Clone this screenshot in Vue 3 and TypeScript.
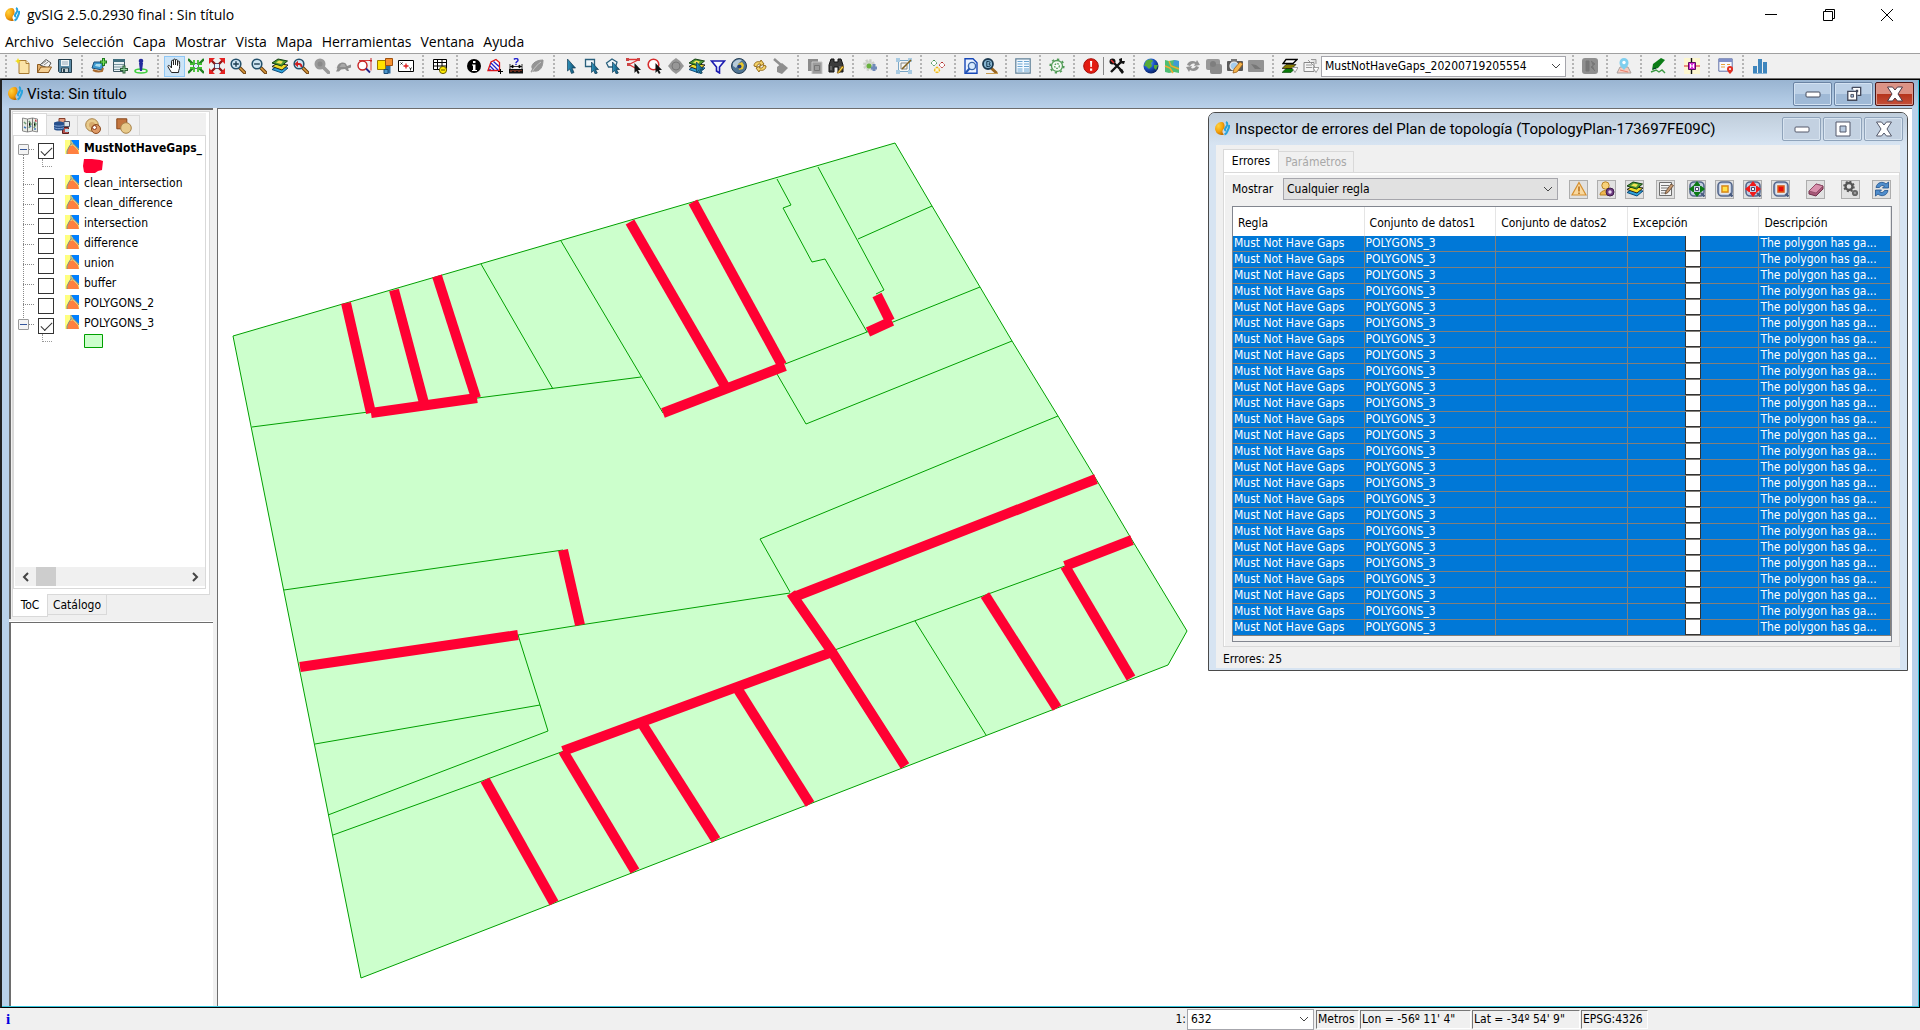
<script setup lang="ts">
import { ref } from 'vue'

interface Tool { icon: string; label: string; active?: boolean; narrow?: boolean }
interface Layer { name: string; on: boolean; current?: boolean; legend?: 'red' | 'green' }

const menus = ['Archivo', 'Selección', 'Capa', 'Mostrar', 'Vista', 'Mapa', 'Herramientas', 'Ventana', 'Ayuda']

const t = (icon: string, label: string, extra: Partial<Tool> = {}): Tool => ({ icon, label, ...extra })

const groups: Tool[][] = [
  [t('new', 'Nuevo'), t('open', 'Abrir'), t('save', 'Guardar')],
  [t('addlayer', 'Añadir capa'), t('addtable', 'Añadir tabla'), t('pin', 'Localizar')],
  [
    t('hand', 'Desplazar', { active: true }), t('zoomall', 'Zoom completo'), t('zoomsel', 'Zoom selección'),
    t('zoomin', 'Acercar'), t('zoomout', 'Alejar'), t('layers', 'Zoom a capa'), t('zoomprev', 'Zoom previo'),
    t('zoomgray', 'Zoom siguiente'), t('turtle', 'Encuadres'), t('zoomrect', 'Gestión de encuadres'),
    t('locator', 'Localizador'), t('coords', 'Centrar en punto'),
  ],
  [t('grid', 'Tabla de atributos')],
  [t('info', 'Información'), t('area', 'Medir área'), t('dist', 'Medir distancia'), t('link', 'Hiperenlace')],
  [
    t('cursor', 'Seleccionar'), t('selrect', 'Por rectángulo'), t('selpoly', 'Por polígono'), t('selline', 'Por polilínea'),
    t('selcirc', 'Por círculo'), t('selbuf', 'Por área de influencia'), t('sellay', 'Por capa'), t('filter', 'Filtro'),
    t('globe', 'Seleccionar todo'), t('invert', 'Invertir selección'), t('broom', 'Limpiar selección'),
  ],
  [t('copy', 'Copiar'), t('binoc', 'Buscar')],
  [t('geargreen', 'Geoproceso')],
  [t('editbox', 'Editar')],
  [t('diamonds', 'Topología')],
  [t('doczoom', 'Vista previa', { narrow: true }), t('bzoom', 'Búsqueda', { narrow: true })],
  [t('doclist', 'Listado')],
  [t('cog', 'Configuración')],
  [t('alert', 'Errores')],
]
const groupsAfter: Tool[] = [
  t('earth', 'Mundo'), t('map', 'Mapa'), t('sync', 'Sincronizar'), t('shots', 'Capturas'), t('camera', 'Cámara'), t('screen', 'Pantalla'),
]
const tail: Tool[] = [
  t('bw', 'Ráster'), t('marker', 'Marcador'), t('pen', 'Dibujar'), t('snap', 'Ajuste'), t('calendar', 'Calendario'), t('bars', 'Gráfico'),
]

const layers = ref<Layer[]>([
  { name: 'MustNotHaveGaps_', on: true, current: true, legend: 'red' },
  { name: 'clean_intersection', on: false },
  { name: 'clean_difference', on: false },
  { name: 'intersection', on: false },
  { name: 'difference', on: false },
  { name: 'union', on: false },
  { name: 'buffer', on: false },
  { name: 'POLYGONS_2', on: false },
  { name: 'POLYGONS_3', on: true, legend: 'green' },
])

const inspectorTools: Tool[][] = [
  [t('warn', 'Errores'), t('user', 'Excepciones'), t('layers', 'Capas')],
  [t('note', 'Descripción')],
  [t('zgreen', 'Zoom al error'), t('zyellow', 'Centrar error'), t('zred', 'Zoom a la selección'), t('zredsq', 'Centrar selección')],
  [t('eraser', 'Borrar')],
  [t('gears', 'Acciones')],
  [t('refresh', 'Actualizar')],
]
const columns = ['Regla', 'Conjunto de datos1', 'Conjunto de datos2', 'Excepción', 'Descripción']
const errors = ref(Array.from({ length: 25 }, () => ({
  rule: 'Must Not Have Gaps', set1: 'POLYGONS_3', set2: '', exception: false, text: 'The polygon has ga...',
})))

const outline = '895,143 932,206 980,287 1012,341 1058,416 1096,479 1132,540 1187,631 1168,665 361,978 233,336'
const parcels = [
  '932,206 858,239', '818,167 884,290 876,294', '777,179 791,205 783,208 812,262 825,259 867,332',
  '980,287 893,322 867,332 785,364', '1012,341 806,424 777,374', '1058,416 760,539 790,592',
  '481,264 553,389', '561,241 663,413', '641,377 252,427', '284,590 563,550', '790,593 580,625 518,635',
  '518,635 540,705 548,731 328,815', '540,705 315,744', '333,835 482,781 564,751', '832,651 1065,566', '915,621 986,735',
]
const gaps = [
  '346,303 371,413', '394,290 424,403', '437,276 476,398', '371,413 477,398', '630,222 726,388', '693,202 782,365',
  '663,413 785,366', '877,295 890,321', '892,321 868,332', '563,550 580,625', '300,667 518,635', '1096,479 794,597',
  '791,593 832,652 905,766', '832,652 563,751', '563,751 635,871', '641,722 716,840', '737,688 810,804',
  '1132,540 1065,566', '1065,566 1131,678', '985,595 1057,708', '485,780 554,903',
]
</script>

<template>
  <div class="app">
    <svg class="sprite" aria-hidden="true">
      <defs>
        <radialGradient id="gOrange" cx="35%" cy="30%" r="75%"><stop offset="0" stop-color="#ffd23c" /><stop offset=".6" stop-color="#f5a20c" /><stop offset="1" stop-color="#c46f00" /></radialGradient>
        <radialGradient id="gEarth" cx="35%" cy="30%" r="75%"><stop offset="0" stop-color="#6db7f5" /><stop offset=".5" stop-color="#1b52c4" /><stop offset="1" stop-color="#071d5c" /></radialGradient>
        <linearGradient id="gCursor" x1="0" x2="1"><stop offset="0" stop-color="#2f93bd" /><stop offset="1" stop-color="#0d4a6b" /></linearGradient>
      </defs>
      <symbol id="i-logo" viewBox="0 0 16 16"><path d="M7 1a6.500 6.500 0 1 0 3 12.500C8 12 8 9.500 9.500 8 11 6.500 11 3 9 1.300A6 6 0 0 0 7 1z" fill="url(#gOrange)" /><path d="M12 1c2 1 1.500 3.500 .2 5-1.300 1.600-2 3-.2 4M15 4c.6 3-1 4-1.500 6-.5 1.800-1.500 3-3 3.500" fill="none" stroke="#27a3dd" stroke-width="2" /></symbol>
      <symbol id="i-new" viewBox="0 0 16 16"><path d="M4 2.500h7l3 3v10H4z" fill="#fbe3a6" stroke="#a87b33" /><path d="M11 2.500v3h3" fill="#fff4d2" stroke="#a87b33" /><path d="M3 0l1 2.200L6 3 4 4 3 6 2 4 0 3l2-.8z" fill="#f2dc16" /></symbol>
      <symbol id="i-open" viewBox="0 0 16 16"><path d="M1.500 14.500v-8h4l1 1h6v7z" fill="#e1ad68" stroke="#8c5a1f" /><path d="M4 7l6-5.500L15 5l-3 5z" fill="#f4f4f4" stroke="#555" /><path d="M6 6l4-3M8 7l4-3" stroke="#888" /><path d="M1.500 14.500L5 9h10.500l-3 5.500z" fill="#f5cf92" stroke="#8c5a1f" /></symbol>
      <symbol id="i-save" viewBox="0 0 16 16"><path d="M1.500 1.500h13v13h-12l-1-1z" fill="#5d8ca8" stroke="#26404e" /><path d="M4 2h8v6H4z" fill="#eef3f5" /><path d="M5 4h6M5 6h6" stroke="#9ab" /><path d="M4.500 10h7v4.500h-7z" fill="#c5d0d5" stroke="#26404e" /><path d="M6 11h2v3H6z" fill="#26404e" /></symbol>
      <symbol id="i-addlayer" viewBox="0 0 16 16"><path d="M3 4l10 0-2 8-10-2z" fill="#3d9ad0" stroke="#1d4d78" /><path d="M5 6l5 0-1 3-5-1z" fill="#a8dcf2" /><path d="M2 12c2 1 5 2 9 1l1-3" stroke="#a8692c" stroke-width="2" fill="none" /><path d="M12.500 0v8M9 4h7" stroke="#1f7a1f" stroke-width="3" /><path d="M12.500 1v6M10 4h5" stroke="#7be35c" /></symbol>
      <symbol id="i-addtable" viewBox="0 0 16 16"><path d="M1.500 1.500h11v12h-11z" fill="#e8f0f2" stroke="#3d5560" /><path d="M1 1h12v3H1z" fill="#3f6e7e" /><path d="M2 6.500h10M2 9h10M2 11.500h10" stroke="#78959e" /><path d="M12 7.500v8M8 11.500h8" stroke="#2b5f37" stroke-width="3" /><path d="M12 8.500v6M9 11.500h6" stroke="#8fd19a" /></symbol>
      <symbol id="i-pin" viewBox="0 0 16 16"><ellipse cx="8" cy="13" rx="6" ry="2" fill="none" stroke="#3ecf3e" stroke-width="1.600" /><circle cx="8" cy="3" r="2.300" fill="#222a9c" /><path d="M6 5h4l-1 8H7z" fill="#222a9c" /></symbol>
      <symbol id="i-hand" viewBox="0 0 16 16"><path d="M4.500 14.500L1 8.800c-.6-1.300 1-2 1.800-.8L4.500 10V3.200c0-1.200 1.800-1.200 1.900 0L6.500 7V2c0-1.300 2-1.300 2 0v5-4.500c0-1.200 2-1.200 2 0V7.500l.3-3.700c.2-1.100 1.800-1 1.800 .2 0 4 .4 6-.9 8.500l-.2 2z" fill="#fff" stroke="#222" /></symbol>
      <symbol id="i-zoomall" viewBox="0 0 16 16"><path d="M5.500 5.500h5v5h-5z" fill="#dff3ff" stroke="#667" /><path d="M0 1l5 5M16 1l-5 5M0 15l5-5M16 15l-5-5" stroke="#1e7f1e" stroke-width="2.400" /><path d="M6 2v4H2M10 2v4h4M6 14v-4H2M10 14v-4h4" fill="none" stroke="#3fbe2f" stroke-width="1.800" /></symbol>
      <symbol id="i-zoomsel" viewBox="0 0 16 16"><path d="M5.500 5.500h5v5h-5z" fill="#dff3ff" stroke="#557" /><path d="M2 2l4 4M14 2l-4 4M2 14l4-4M14 14l-4-4" stroke="#8e1717" stroke-width="2.400" /><path d="M0 0h6L0 6zM16 0h-6l6 6zM0 16h6l-6-6zM16 16h-6l6-6z" fill="#e52222" /></symbol>
      <symbol id="i-mag" viewBox="0 0 16 16"><path d="M9.500 9.500l5 5" stroke="#6b3d0a" stroke-width="3.600" stroke-linecap="round" /><path d="M10 10l4.500 4.500" stroke="#d99b40" stroke-width="1.600" stroke-linecap="round" /><circle cx="6" cy="6" r="4.800" fill="#cfe6f3" stroke="#23506b" stroke-width="1.600" /></symbol>
      <symbol id="i-zoomin" viewBox="0 0 16 16"><use href="#i-mag" /><path d="M6 3.200v5.600M3.200 6h5.600" stroke="#1d3c50" stroke-width="1.400" /></symbol>
      <symbol id="i-zoomout" viewBox="0 0 16 16"><use href="#i-mag" /><path d="M3.200 6h5.600" stroke="#1d3c50" stroke-width="1.400" /></symbol>
      <symbol id="i-layers" viewBox="0 0 16 16"><path d="M0 11.500l5-3 11 1.500-6 5z" fill="#2da3dc" stroke="#0c4a78" /><path d="M0 8.500l5-3L16 7l-6 5z" fill="#f0dc28" stroke="#222" /><path d="M0 5l6-4 9.500 2L9.500 8z" fill="#4f9834" stroke="#123f12" /><path d="M4 4.500l3-2 4 1-2 2.500z" fill="#f3e555" /></symbol>
      <symbol id="i-zoomprev" viewBox="0 0 16 16"><use href="#i-mag" /><path d="M3 6h3c2 0 2.500 1 2.500 3" fill="none" stroke="#cf1d1d" stroke-width="1.800" /><path d="M1.500 6L5 2.800v6.400z" fill="#cf1d1d" /></symbol>
      <symbol id="i-zoomgray" viewBox="0 0 16 16"><path d="M9.500 9.500l5 5" stroke="#9a9a9a" stroke-width="3.600" stroke-linecap="round" /><circle cx="6" cy="6" r="5.500" fill="#9a9a9a" /><circle cx="6" cy="6" r="2.500" fill="#8a8a8a" /></symbol>
      <symbol id="i-turtle" viewBox="0 0 16 16"><path d="M2 10c0-6 9-8 10-2l4-1.500V9.500L13 10.500l1 2.500h-2l-2-2-4 .5-2 2H1l1.500-3-2.500-1z" fill="#8d8d8d" /><path d="M4.500 9l2-3 3 0 1.500 3z" fill="#a9a9a9" /></symbol>
      <symbol id="i-zoomrect" viewBox="0 0 16 16"><path d="M3 2.500h12v10" fill="none" stroke="#d43c3c" /><circle cx="6.500" cy="7.500" r="4.500" fill="#fff" stroke="#c62020" stroke-width="1.400" /><path d="M10 10.500l4 4" stroke="#23238a" stroke-width="1.800" /><path d="M15 0v4M13 2.500h3" stroke="#c62020" /></symbol>
      <symbol id="i-locator" viewBox="0 0 16 16"><path d="M7 7h6.500v8.500H7z" fill="#2d6da3" /><path d="M.5 2.500h8v9h-8z" fill="#ffe100" stroke="#977800" /><path d="M8.500 .5h7v7h-7z" fill="#f79130" stroke="#a0500c" /><path d="M7 11.500h4v4H7z" fill="#4b96cc" stroke="#1b4c78" /></symbol>
      <symbol id="i-coords" viewBox="0 0 16 16"><path d="M.5 2.500h15v11H.5z" fill="#fff" stroke="#000" /><path d="M8 5.500v5M5.500 8h5" stroke="#e01b1b" stroke-width="1.300" /><path d="M2.500 4.500l2 2m0-2l-2 2M11.500 9.500l1 1.500 1-1.500M12.500 11v1.500" stroke="#000" stroke-width=".8" fill="none" /></symbol>
      <symbol id="i-grid" viewBox="0 0 16 16"><path d="M1.500 1.500h13v10h-13zM1.500 4.500h13M1.500 8h13M5.500 1.500v10M10 1.500v10" fill="#fff" stroke="#000" /><circle cx="11" cy="12" r="3.600" fill="#ffeb00" stroke="#665b00" /><path d="M9 12h4" stroke="#665b00" /></symbol>
      <symbol id="i-info" viewBox="0 0 16 16"><circle cx="8" cy="8" r="7" fill="#000" /><path d="M7 3h2.500v2H7zM6 6.500h3.500V12H11v1H6v-1h1V7.500H6z" fill="#fff" /></symbol>
      <symbol id="i-area" viewBox="0 0 16 16"><path d="M1 12.500L4 4l5-2.500 3.500 3v8z" fill="#fff" stroke="#e01515" stroke-width="1.300" /><path d="M3 8l4 4M4 5l7 7M6.500 3.500l5.500 5M2.500 11l1 1" stroke="#2020cc" stroke-width="1.300" /><path d="M13.500 11v5M11 13.500h5" stroke="#000" /></symbol>
      <symbol id="i-dist" viewBox="0 0 16 16"><path d="M6 1.500c1-1.500 4-1.300 4 .7 0 1.500-2 1.500-2 3M8 6v1" fill="none" stroke="#2525d0" stroke-width="1.500" /><path d="M2 8.500h12M2 6v5M14 6v5M3 8.500l2-1.500v3zM13 8.500l-2-1.500v3z" stroke="#000" stroke-width=".8" /><path d="M1 11h14v4.500H1z" fill="#111" /><path d="M3 12v2M5 12v1M7 12v2M9 12v1M11 12v2M13 12v1" stroke="#e53" stroke-width=".8" /></symbol>
      <symbol id="i-link" viewBox="0 0 16 16"><path d="M2 14l1.500-3C1 7 6 2 14 2c0 7-3 12-9 11z" fill="#949494" stroke="#949494" /><path d="M3 14c3-5 5-7 9-10" stroke="#c5c5c5" fill="none" /></symbol>
      <symbol id="i-cursor" viewBox="0 0 16 16"><path d="M4.500 1l8 9H9l2 4.500-2.500 1L6.700 11l-2.200 2z" fill="url(#gCursor)" stroke="#123c55" stroke-width=".7" /></symbol>
      <symbol id="i-cur2" viewBox="0 0 16 16"><path d="M7.500 4l7 7.500h-3l1.800 3.500-2 1L9.500 12.500l-2 2z" fill="url(#gCursor)" stroke="#123c55" stroke-width=".7" /></symbol>
      <symbol id="i-cur3" viewBox="0 0 16 16"><path d="M8.500 5l6.500 7h-3l1.600 3-1.600 1L10.300 13l-1.800 2z" fill="#111" /></symbol>
      <symbol id="i-selrect" viewBox="0 0 16 16"><path d="M1.500 1.500h9v7h-9z" fill="#eff6fa" stroke="#2a607c" stroke-width="1.300" /><use href="#i-cur2" /></symbol>
      <symbol id="i-selpoly" viewBox="0 0 16 16"><path d="M1.500 5L7 1l5 3-1.500 5h-7z" fill="#eff6fa" stroke="#2a607c" stroke-width="1.300" /><use href="#i-cur2" /></symbol>
      <symbol id="i-selline" viewBox="0 0 16 16"><path d="M2 1.500h11L3 6.500 11 11" fill="none" stroke="#d33" stroke-width="1.300" /><path d="M0 0h3v3H0zM11 0h3v3h-3zM1 5h3v3H1z" fill="#c44" /><use href="#i-cur3" /></symbol>
      <symbol id="i-selcirc" viewBox="0 0 16 16"><circle cx="6.500" cy="6.500" r="5.300" fill="#fff" stroke="#d62d2d" stroke-width="1.600" /><use href="#i-cur3" /></symbol>
      <symbol id="i-selbuf" viewBox="0 0 16 16"><path d="M8 0l4 3 4 5-4 5-4 3-4-3-4-5 4-5z" fill="#979797" /><circle cx="8" cy="8" r="4" fill="none" stroke="#777" /></symbol>
      <symbol id="i-sellay" viewBox="0 0 16 16"><use href="#i-layers" /><use href="#i-cur2" /></symbol>
      <symbol id="i-filter" viewBox="0 0 16 16"><path d="M1.500 3h13L9.500 9v6l-3-2V9z" fill="#f3f5ff" stroke="#1a1ab0" stroke-width="1.600" /></symbol>
      <symbol id="i-globe" viewBox="0 0 16 16"><circle cx="8" cy="8" r="7.500" fill="#4f7392" stroke="#243c52" /><path d="M2 5c3-4 7-4 9-3l-3 3-3 5-3-2z" fill="#b8cbd8" /><path d="M7 6l4-2 2 3-1 4-4 1z" fill="#e8c62c" /><circle cx="8.500" cy="8.500" r="2" fill="#223c7a" /></symbol>
      <symbol id="i-invert" viewBox="0 0 16 16"><path d="M2 8c0-4 4-5 6-4l1-2 3 4-4 2 .5-2C6 5.500 5 7 5 9zM14 8c0 4-4 5-6 4l-1 2-3-4 4-2-.5 2c3 .5 4-1 4-3z" fill="#f5d36a" stroke="#8d6210" stroke-width=".9" /></symbol>
      <symbol id="i-broom" viewBox="0 0 16 16"><path d="M1 1l7 6" stroke="#8e8e8e" stroke-width="2.500" /><path d="M4 9l5-4 6 5-6 6-5-2z" fill="#8e8e8e" /></symbol>
      <symbol id="i-copy" viewBox="0 0 16 16"><path d="M1 1h10v12H1z" fill="#8b8b8b" /><path d="M5 4h10v12H5z" fill="#9c9c9c" stroke="#c7c7c7" /><path d="M7.500 7.500h5v5h-5z" fill="none" stroke="#777" /></symbol>
      <symbol id="i-binoc" viewBox="0 0 16 16"><path d="M3 1h3v3h4V1h3l2 6v7h-5V9H6v5H1V7z" fill="#3c3c3c" stroke="#111" /><path d="M3 8v4M12 8v4" stroke="#8a8a8a" /><path d="M9 15l5-7 2 1-5 6z" fill="#f5d04d" stroke="#7c5200" stroke-width=".7" /></symbol>
      <symbol id="i-geargreen" viewBox="0 0 16 16"><circle cx="7" cy="7" r="4.500" fill="#d5d8d2" stroke="#cccfc9" stroke-width="3" stroke-dasharray="2 1.500" /><circle cx="7" cy="8" r="2.500" fill="#68b13e" /><path d="M12 6v7M9 10h6" stroke="#6f8ab8" stroke-width="3" /></symbol>
      <symbol id="i-editbox" viewBox="0 0 16 16"><path d="M2.500 2.500h11v11h-11z" fill="#f6f6f2" stroke="#7aa6c6" /><path d="M5 11V5h6M5 11h6V7" fill="none" stroke="#888" /><path d="M0 0h4v4H0zM12 0h4v4h-4zM12 12h4v4h-4zM0 12h4v4H0z" fill="#a9cbe2" /><path d="M6 11l9-9" stroke="#80601c" stroke-width="1.600" /></symbol>
      <symbol id="i-diamonds" viewBox="0 0 16 16"><path d="M4 2l3 3-3 3-3-3z" fill="#fff" stroke="#3b8f4c" stroke-dasharray="1.500 .7" /><path d="M12 4l3 3-3 3-3-3z" fill="#fff" stroke="#b22c2c" stroke-dasharray="1.500 .7" /><path d="M7 9l3 3-3 3-3-3z" fill="#fff7cc" stroke="#efb710" stroke-width="1.300" stroke-dasharray="1.500 .7" /></symbol>
      <symbol id="i-doczoom" viewBox="0 0 16 16"><path d="M2 .8h8l4 4v10.500H2z" fill="#eaf2ff" stroke="#1647b8" stroke-width="1.400" /><circle cx="9" cy="8" r="3.600" fill="#d8eaff" stroke="#3a66aa" stroke-width="1.400" /><path d="M6.500 10.500l-4 4.500" stroke="#2657b5" stroke-width="2" /></symbol>
      <symbol id="i-bzoom" viewBox="0 0 16 16"><path d="M8 9l6 5.500" stroke="#9a661f" stroke-width="3" stroke-linecap="round" /><circle cx="6" cy="6" r="5" fill="#86b5d1" stroke="#1b3a50" stroke-width="1.800" /><path d="M4.800 3.500v5h2c2 0 2-2.300 0-2.500 1.600-.3 1.600-2.500-.2-2.500z" fill="none" stroke="#14364d" /><path d="M4 15.500h12" stroke="#c89b4e" /></symbol>
      <symbol id="i-doclist" viewBox="0 0 16 16"><path d="M.8 .8h14.400v14.400H.8z" fill="#f2f9ff" stroke="#5f8098" stroke-width="1.200" /><path d="M2.500 3.500h5M2.500 6h5M2.500 8.500h5M2.500 11h5M9 3.500h5M9 6h5M9 8.500h5M9 11h5M2.500 13h5M9 13h5" stroke="#6ba5d1" /></symbol>
      <symbol id="i-cog" viewBox="0 0 16 16"><circle cx="8" cy="8" r="5.500" fill="#f1f8ef" stroke="#4f9a55" stroke-width="1.300" /><circle cx="8" cy="8" r="6.800" fill="none" stroke="#4f9a55" stroke-width="1.600" stroke-dasharray="2.300 3" /><circle cx="8" cy="8" r="2.300" fill="#fff" stroke="#4f9a55" stroke-width="1.200" stroke-dasharray="1.500 1" /></symbol>
      <symbol id="i-alert" viewBox="0 0 16 16"><circle cx="8" cy="8" r="7.300" fill="#e31c12" stroke="#a50d08" /><path d="M7 3h2.200l-.4 6H7.400zM7 10.500h2.200v2.200H7z" fill="#fff" /></symbol>
      <symbol id="i-tools" viewBox="0 0 16 16"><path d="M4 4l9 9M12 4L2 14" stroke="#111" stroke-width="2.400" /><path d="M10 1l1 4 4 1 1-3-3 0 0-3zM10 12l3-1 2 3-2 2z" fill="#111" /><circle cx="3.500" cy="3.500" r="3" fill="#111" /><path d="M2 2l3 3" stroke="#d33" stroke-width="1.600" /></symbol>
      <symbol id="i-earth" viewBox="0 0 16 16"><circle cx="8" cy="8" r="7.500" fill="url(#gEarth)" /><path d="M3 3c3-2 6-2 7 0L8 5l1 3-3 3-3-3-2 0zM11 7l4 0-2 5-2-2z" fill="#58ab38" /></symbol>
      <symbol id="i-map" viewBox="0 0 16 16"><path d="M1 2l4 1 5-1 5 1v12l-5-1-5 1-4-1z" fill="#4dbd74" /><path d="M10 2l5 1v6l-6-2z" fill="#3f99d6" /><path d="M1 8l5 2 3 5M5 3l2 5 8 3" fill="none" stroke="#f0a92e" stroke-width="1.500" /></symbol>
      <symbol id="i-sync" viewBox="0 0 16 16"><path d="M2 7c1-4 6-5 9-3l1-2 3 5-6 1 1-2c-2-1-4 0-5 2zM14 9c-1 4-6 5-9 3l-1 2-3-5 6-1-1 2c2 1 4 0 5-2z" fill="#939393" /></symbol>
      <symbol id="i-shots" viewBox="0 0 16 16"><rect x="0" y="1" width="14" height="11" rx="2" fill="#999" /><rect x="4" y="6" width="12" height="10" rx="2" fill="#8b8b8b" /><circle cx="7" cy="6" r="3" fill="#7e7e7e" /></symbol>
      <symbol id="i-camera" viewBox="0 0 16 16"><rect x="0" y="3" width="16" height="10" rx="1" fill="#595959" /><path d="M4 1h6v3H4z" fill="#777" /><circle cx="7" cy="8" r="4" fill="#a5cdec" stroke="#eee" stroke-width="1.200" /><path d="M6 15l1-4 6-7 3 2-6 8z" fill="#f4b44b" stroke="#9a5b14" stroke-width=".8" /></symbol>
      <symbol id="i-screen" viewBox="0 0 16 16"><rect x="0" y="2" width="16" height="12" rx="1" fill="#929292" /><path d="M3 6l5 1 5 4-6 0z" fill="#777" /></symbol>
      <symbol id="i-stack" viewBox="0 0 16 16"><path d="M4 10.500h9l-4 4H0z" fill="#087a08" stroke="#043f04" stroke-width=".6" /><path d="M4 6.500h10l-4 4H0z" fill="#847b00" stroke="#000" stroke-width=".6" /><path d="M4 1.500h11l-4 4H1z" fill="#fff" stroke="#000" stroke-width="1.300" /><path d="M10 9.500h6l-3 5z" fill="#fff" stroke="#888" stroke-width=".8" /></symbol>
      <symbol id="i-editstack" viewBox="0 0 16 16"><path d="M1 4.500h10v9H1z" fill="#f5f5f5" stroke="#888" /><path d="M3 7h6M3 9.500h6M5 2l7 7" stroke="#999" /><path d="M8 1.500h5V6" fill="#ddd" stroke="#999" /><path d="M10 9.500h6l-3 5z" fill="#fff" stroke="#888" stroke-width=".8" /></symbol>
      <symbol id="i-bw" viewBox="0 0 16 16"><rect x="0" y="0" width="16" height="16" rx="3" fill="#8f8f8f" /><path d="M4 3h3v10H4zM9 3l4 3-4 3 4 4" fill="#777" stroke="#777" /></symbol>
      <symbol id="i-marker" viewBox="0 0 16 16"><path d="M1 15l3-6h8l3 6z" fill="#f7c9bd" stroke="#a9a29f" /><path d="M4 12l8 2" stroke="#e9806b" /><path d="M8 12C4 8 3.500 6.500 3.500 4.500a4.500 4.500 0 0 1 9 0C12.500 6.500 12 8 8 12z" fill="#80cfef" /><circle cx="8" cy="4.500" r="1.700" fill="#fff" /></symbol>
      <symbol id="i-pen" viewBox="0 0 16 16"><path d="M2 12l1-6 8-6 4 2-7 8z" fill="#0b7c16" /><path d="M3 11l3-1" stroke="#033" /><path d="M1 14l5-2 3 2 3-2 3 3" fill="none" stroke="#3b9a43" stroke-width="1.400" /></symbol>
      <symbol id="i-snap" viewBox="0 0 16 16"><path d="M0 0h16v16H0z" fill="#fdf7cf" /><path d="M7.500 0v16" stroke="#111" stroke-width="1.400" /><path d="M0 8h16" stroke="#e25353" stroke-width="1.300" /><path d="M4.500 4.500h7v7h-7z" fill="#d633d6" stroke="#5d0a5d" /><path d="M6.500 6v4M9.500 6v4M6.500 8h3" stroke="#fff" /></symbol>
      <symbol id="i-calendar" viewBox="0 0 16 16"><path d="M.8 .8h13.400v12.400H.8z" fill="#f8f9ff" stroke="#6272a8" /><path d="M1 1h13v3H1z" fill="#7f8fc8" /><path d="M3 6.500h4M3 9h4M9 6.500h3" stroke="#e8a13a" /><path d="M12 16c-3-3-3-4-3-5a3 3 0 0 1 6 0c0 1 0 2-3 5z" fill="#e33022" /><circle cx="12" cy="11" r="1" fill="#fff" /></symbol>
      <symbol id="i-bars" viewBox="0 0 16 16"><path d="M1 8h4v7H1zM6 1h4v14H6zM11 4h4v11h-4z" fill="#3f86bd" /><path d="M1 15.500h14" stroke="#8bb6d8" /></symbol>
      <symbol id="i-layer" viewBox="0 0 14 14"><path d="M0 0h14v14H0z" fill="#ffff80" /><path d="M6 0h8v9L9 5z" fill="#0080ff" /><path d="M2 14c0-4 2-6 3-8l3-1 5 5 1 4z" fill="#ff8040" /><path d="M6 0v4l-2 3-2 4v3M6 4h3l5 6" fill="none" stroke="#808080" /></symbol>
      <symbol id="i-tabmap" viewBox="0 0 16 16"><path d="M.5 1l5 1 5-1 5 1v13l-5-1-5 1-5-1z" fill="#e9ece4" stroke="#8a8a8a" /><path d="M5.500 2v13M10.500 1v13" stroke="#777" /><path d="M2 5l2 2M7 4l2 3-2 4M12 5l2 2-2 4" stroke="#6d9a75" stroke-width="1.500" /><path d="M2 10l2 1M8 9l1 1M12 12l2 0" stroke="#4178c0" stroke-width="1.500" /><path d="M13 3h1v2" stroke="#d45" /></symbol>
      <symbol id="i-tabdb" viewBox="0 0 16 16"><path d="M5 .5h6v5H5z" fill="#e79a7c" stroke="#84412c" /><path d="M10 3.500h5.500v5H10z" fill="#dbe4ea" stroke="#556" /><path d="M8.500 9.500h6v6h-6z" fill="#b5504c" stroke="#5c1f1f" /><path d="M11 11h4v3h-4z" fill="#b8d9e8" /><path d="M0 5c0-2 10-2 10 0v6c0 2-10 2-10 0z" fill="#27508c" /><path d="M0 7c1 1.500 9 1.500 10 0M0 9.500c1 1.500 9 1.500 10 0" fill="none" stroke="#80a3d3" /></symbol>
      <symbol id="i-tabcirc" viewBox="0 0 16 16"><circle cx="7" cy="7" r="6.300" fill="#e8ca8b" stroke="#a9834a" /><circle cx="7" cy="7" r="3" fill="#d7a96b" /><circle cx="11" cy="11" r="4.500" fill="#dd9a66" stroke="#8d4c1f" /><circle cx="9.500" cy="9.500" r="2" fill="#fff" stroke="#8d3c1f" /></symbol>
      <symbol id="i-tabsq" viewBox="0 0 16 16"><path d="M.8 .8h10v10H.8z" fill="#c4763f" stroke="#884719" /><circle cx="10" cy="10" r="5.300" fill="#e8ca8b" stroke="#a9834a" /></symbol>
      <symbol id="i-warn" viewBox="0 0 16 16"><path d="M8 1.500l7 12.500H1z" fill="#f9d9a0" stroke="#d58f2f" stroke-width="1.200" /><path d="M8 5.500v5M8 11.500v1.500" stroke="#b86c14" stroke-width="1.500" /></symbol>
      <symbol id="i-user" viewBox="0 0 16 16"><circle cx="6.500" cy="4.500" r="3.700" fill="#f7d179" stroke="#b78326" /><path d="M1 14c0-6 11-6 11 0z" fill="#f0b84e" stroke="#b78326" /><circle cx="11" cy="11" r="4" fill="#6d3b80" stroke="#3c1c49" /><circle cx="11" cy="11" r="1.700" fill="#e8d7ef" /></symbol>
      <symbol id="i-note" viewBox="0 0 16 16"><path d="M1.500 1.500h12v13h-12z" fill="#f4f4f4" stroke="#6d6d6d" /><path d="M3 4.500h8M3 7h7M3 9.500h5M3 12h4" stroke="#777" /><path d="M7 13l1-3 5-7 2.500 1.500-5.500 7z" fill="#c59a72" stroke="#59402c" stroke-width=".8" /></symbol>
      <symbol id="i-lens" viewBox="0 0 16 16"><rect x="1" y="1" width="14" height="14" rx="4" fill="#c3cee2" stroke="#55688c" stroke-width="1.600" /><path d="M12 12l3.500 3.500" stroke="#4a5c80" stroke-width="2.400" /></symbol>
      <symbol id="i-arrows4" viewBox="0 0 16 16"><path d="M8 0l4 5H4zM8 16l4-5H4zM0 8l5-4v8zM16 8l-5-4v8z" /><path d="M6.500 6.500h3v3h-3z" fill="#fff" stroke="#446" /></symbol>
      <symbol id="i-zgreen" viewBox="0 0 16 16"><use href="#i-lens" /><use href="#i-arrows4" fill="#0b7a14" /></symbol>
      <symbol id="i-zred" viewBox="0 0 16 16"><use href="#i-lens" /><use href="#i-arrows4" fill="#f01a1a" /></symbol>
      <symbol id="i-zyellow" viewBox="0 0 16 16"><use href="#i-lens" /><path d="M3.500 3.500h9v9h-9z" fill="none" stroke="#e9e9e9" /><path d="M5 5h6v6H5z" fill="#ffe14a" stroke="#e08a10" stroke-width="1.400" /></symbol>
      <symbol id="i-zredsq" viewBox="0 0 16 16"><use href="#i-lens" /><path d="M3.500 3.500h9v9h-9z" fill="none" stroke="#e9e9e9" /><path d="M5 5h6v6H5z" fill="#e80c0c" stroke="#e05a10" stroke-width="1.400" /></symbol>
      <symbol id="i-eraser" viewBox="0 0 16 16"><path d="M1 10l7-7 7 2v3l-7 7-7-2z" fill="#a85878" stroke="#6e3049" /><path d="M1 10l7-7 7 2-7 7z" fill="#d990ac" stroke="#8c4763" stroke-width=".8" /></symbol>
      <symbol id="i-gears" viewBox="0 0 16 16"><circle cx="6" cy="5.500" r="3.500" fill="none" stroke="#555" stroke-width="2.400" /><circle cx="6" cy="5.500" r="5" fill="none" stroke="#555" stroke-width="1.500" stroke-dasharray="2 1.900" /><circle cx="12" cy="12" r="2.200" fill="#999" stroke="#666" stroke-width="1.800" /></symbol>
      <symbol id="i-refresh" viewBox="0 0 16 16"><path d="M2 6.500C3 1 9 0 12 3l2.500-2v6H8.500l2-2C8.500 4 6.500 4.500 5.500 6.500zM14 9.500C13 15 7 16 4 13l-2.500 2V9h6l-2 2c2 1 4 .5 5-1.500z" fill="#4f8dcc" stroke="#20508a" stroke-width=".8" /></symbol>
      <symbol id="i-chev" viewBox="0 0 10 10"><path d="M1 3l4 4 4-4" fill="none" stroke="#444" /></symbol>
    </svg>

    <header class="titlebar">
      <svg class="logo"><use href="#i-logo" /></svg>
      <span class="title">gvSIG 2.5.0.2930 final : Sin título</span>
      <div class="wincontrols">
        <button aria-label="Minimizar"><svg viewBox="0 0 12 12"><path d="M0 5.500h12" stroke="#000" /></svg></button>
        <button aria-label="Restaurar"><svg viewBox="0 0 12 12"><path d="M.5 2.500h9v9h-9zM2.500 2.500v-2h9v9h-2" fill="none" stroke="#000" /></svg></button>
        <button aria-label="Cerrar"><svg viewBox="0 0 12 12"><path d="M0 0l12 12M12 0L0 12" stroke="#000" /></svg></button>
      </div>
    </header>

    <nav class="menubar"><button v-for="m in menus" :key="m">{{ m }}</button></nav>

    <div class="toolbar" role="toolbar">
      <template v-for="(g, i) in groups" :key="i">
        <span class="grip"></span>
        <button v-for="b in g" :key="b.icon" class="tool" :class="{ active: b.active, narrow: b.narrow }" :aria-label="b.label"><svg><use :href="'#i-' + b.icon" /></svg></button>
      </template>
      <span class="rule"></span>
      <button class="tool" aria-label="Preferencias"><svg><use href="#i-tools" /></svg></button>
      <span class="grip"></span>
      <button v-for="b in groupsAfter" :key="b.icon" class="tool" :aria-label="b.label"><svg><use :href="'#i-' + b.icon" /></svg></button>
      <span class="grip"></span>
      <button class="tool" aria-label="Capa activa"><svg><use href="#i-stack" /></svg></button>
      <button class="tool" aria-label="Acciones de capa"><svg><use href="#i-editstack" /></svg></button>
      <div class="combo layercombo">
        <select aria-label="Capa"><option>MustNotHaveGaps_20200719205554</option></select>
        <svg><use href="#i-chev" /></svg>
      </div>
      <template v-for="b in tail" :key="b.icon">
        <span class="grip"></span>
        <button class="tool" :aria-label="b.label"><svg><use :href="'#i-' + b.icon" /></svg></button>
      </template>
    </div>

    <main class="frame">
      <div class="frametitle">
        <svg class="logo"><use href="#i-logo" /></svg>
        <span class="title">Vista: Sin título</span>
        <div class="mdi">
          <button aria-label="Minimizar vista"><svg viewBox="0 0 18 16"><rect x="2" y="6" width="14" height="5" rx="1" fill="#fff" stroke="#444a5c" /></svg></button>
          <button aria-label="Restaurar vista"><svg viewBox="0 0 18 18"><path d="M7 1.500h9.500v9H13M7 1.500V4M11 5h2v2" fill="#fff" stroke="#444a5c" stroke-width="1.500" /><path d="M2 6h10v10H2z" fill="#fff" stroke="#444a5c" stroke-width="1.500" /><path d="M5.500 9.500h3v3h-3z" fill="#9fb9d6" stroke="#444a5c" /></svg></button>
          <button class="close" aria-label="Cerrar vista"><svg viewBox="0 0 18 16"><path d="M1.500 1h5L9 4l2.500-3h5l-4.500 7 4.500 7h-5L9 12l-2.500 3h-5L6 8z" fill="#fff" stroke="#4e3a48" stroke-linejoin="round" /></svg></button>
        </div>
      </div>

      <div class="work">
        <aside class="side">
          <section class="tocpane">
            <div class="tocbox">
              <div class="tabs">
                <button class="on" aria-label="Capas"><svg><use href="#i-tabmap" /></svg></button>
                <button aria-label="Orígenes"><svg><use href="#i-tabdb" /></svg></button>
                <button aria-label="Visibles"><svg><use href="#i-tabcirc" /></svg></button>
                <button aria-label="Seleccionadas"><svg><use href="#i-tabsq" /></svg></button>
              </div>
              <div class="tree">
                <ul>
                  <li v-for="(l, i) in layers" :key="l.name">
                    <div class="row" :class="{ first: i === 0, last: i === layers.length - 1 }">
                      <span class="node"><span v-if="l.legend" class="expander"></span></span>
                      <label>
                        <input v-model="l.on" type="checkbox" />
                        <svg><use href="#i-layer" /></svg>
                        <span :class="{ current: l.current }">{{ l.name }}</span>
                      </label>
                    </div>
                    <div v-if="l.legend" class="legend" :class="{ cont: i === 0 }">
                      <span class="elbow"></span>
                      <svg v-if="l.legend === 'red'" viewBox="0 0 20 14"><path d="M1 0l8 0 8 1 3 1-1 9-4 1-3 2H3l-2-1-1-6z" fill="#ff0033" /></svg>
                      <svg v-else viewBox="0 0 20 14"><path d="M1.500 .5h18v13h-18z" fill="#ccffcc" stroke="#00a000" /></svg>
                    </div>
                  </li>
                </ul>
                <div class="hscroll">
                  <button aria-label="Izquierda"><svg viewBox="0 0 10 10"><path d="M7 1L3 5l4 4" fill="none" stroke="#444" stroke-width="2" /></svg></button>
                  <span class="thumb"></span>
                  <button aria-label="Derecha"><svg viewBox="0 0 10 10"><path d="M3 1l4 4-4 4" fill="none" stroke="#444" stroke-width="2" /></svg></button>
                </div>
              </div>
            </div>
            <div class="bottomtabs"><button class="on">ToC</button><button>Catálogo</button></div>
          </section>
          <section class="overview"></section>
        </aside>

        <section class="mapview">
          <svg class="map" viewBox="218 109 980 880" width="980" height="880">
            <polygon :points="outline" fill="#ccffcc" stroke="#00a000" />
            <polyline v-for="p in parcels" :key="p" :points="p" fill="none" stroke="#00a000" />
            <polyline v-for="g in gaps" :key="g" :points="g" fill="none" stroke="#ff0033" stroke-width="10" />
          </svg>

          <section class="inspector">
            <div class="institle">
              <svg class="logo"><use href="#i-logo" /></svg>
              <span class="title">Inspector de errores del Plan de topología (TopologyPlan-173697FE09C)</span>
              <div class="mdi">
                <button aria-label="Minimizar inspector"><svg viewBox="0 0 18 16"><rect x="2" y="6" width="14" height="5" rx="1" fill="#fff" stroke="#55596a" /></svg></button>
                <button aria-label="Maximizar inspector"><svg viewBox="0 0 18 16"><path d="M2 1h14v14H2z" fill="#fff" stroke="#55596a" /><path d="M6 5h6v6H6z" fill="#b9cbe0" stroke="#55596a" /></svg></button>
                <button aria-label="Cerrar inspector"><svg viewBox="0 0 18 16"><path d="M1.500 1h5L9 4l2.500-3h5l-4.500 7 4.500 7h-5L9 12l-2.500 3h-5L6 8z" fill="#fff" stroke="#55596a" stroke-linejoin="round" /></svg></button>
              </div>
            </div>
            <div class="insbody">
              <div class="instabs"><button class="on">Errores</button><button disabled>Parámetros</button></div>
              <div class="inspanel">
                <div class="insbar">
                  <label for="rule">Mostrar</label>
                  <div class="combo rulecombo">
                    <select id="rule"><option>Cualquier regla</option></select>
                    <svg><use href="#i-chev" /></svg>
                  </div>
                  <div class="insgroups">
                    <div v-for="(g, i) in inspectorTools" :key="i" class="insgroup">
                      <button v-for="b in g" :key="b.icon" :aria-label="b.label"><svg><use :href="'#i-' + b.icon" /></svg></button>
                    </div>
                  </div>
                </div>
                <div class="tablebox">
                  <table>
                    <thead><tr><th v-for="c in columns" :key="c">{{ c }}</th></tr></thead>
                    <tbody>
                      <tr v-for="(e, i) in errors" :key="i">
                        <td>{{ e.rule }}</td><td>{{ e.set1 }}</td><td>{{ e.set2 }}</td>
                        <td class="mid"><input v-model="e.exception" type="checkbox" aria-label="Excepción" /></td>
                        <td>{{ e.text }}</td>
                      </tr>
                    </tbody>
                  </table>
                </div>
              </div>
              <div class="count">Errores: 25</div>
            </div>
          </section>
        </section>
      </div>
    </main>

    <footer class="status">
      <span class="inf">i</span>
      <label for="scale">1:</label>
      <div class="combo scalecombo">
        <select id="scale"><option>632</option></select>
        <svg><use href="#i-chev" /></svg>
      </div>
      <span class="cell units">Metros</span>
      <span class="cell lon">Lon = -56º 11' 4"</span>
      <span class="cell lat">Lat = -34º 54' 9"</span>
      <span class="cell epsg">EPSG:4326</span>
    </footer>
  </div>
</template>

<style>
body { margin: 0; background: #f0f0f0; }
</style>

<style scoped>
* { box-sizing: border-box; }
.app { display: flex; flex-direction: column; min-height: 100vh; font: 12px/16px "DejaVu Sans Condensed", "DejaVu Sans", sans-serif; color: #000; }
button { font: inherit; color: inherit; border: 0; padding: 0; margin: 0; background: none; display: flex; align-items: center; justify-content: center; }
svg { display: block; flex: none; }
.sprite { position: absolute; width: 0; height: 0; }
.logo { width: 16px; height: 16px; }
.title { font: 15px/20px Roboto, "Noto Sans", sans-serif; white-space: nowrap; }

.titlebar { display: flex; align-items: center; height: 29px; padding-left: 4px; gap: 7px; background: #fff; }
.titlebar .title { font: 14px/20px "Open Sans", "Noto Sans", sans-serif; }
.wincontrols { margin-left: auto; display: flex; padding-right: 4px; }
.wincontrols button { width: 58px; height: 28px; }
.wincontrols svg { width: 12px; height: 12px; }

.menubar { display: flex; align-items: flex-end; height: 24px; background: #fff; padding-left: 5px; gap: 9px; }
.menubar button { font: 14px/22px "Open Sans", "Noto Sans", sans-serif; }

.toolbar { display: flex; align-items: center; height: 26px; background: #f0f0f0; border-top: 1px solid #a0a0a0; border-bottom: 1px solid #6e6e6e; }
.grip { width: 13px; height: 22px; flex: none; background: repeating-linear-gradient(#b4b4b4 0 2px, transparent 2px 4px) center / 2px 22px no-repeat; }
.grip:first-child { width: 12px; }
.tool { width: 21px; height: 21px; flex: none; }
.tool.narrow { width: 19px; }
.tool svg { width: 16px; height: 16px; }
.tool.active { background: #cce4f7; border: 1px solid #90c8f6; }
.rule { width: 1px; height: 18px; margin: 0 2px; background: #888; flex: none; }

.combo { position: relative; flex: none; }
.combo select { appearance: none; display: block; width: 100%; height: 100%; margin: 0; border: 1px solid #a6a6ac; border-radius: 0; background: #fff; font: inherit; color: #000; padding: 0 20px 0 3px; }
.combo svg { position: absolute; right: 5px; top: 50%; width: 10px; height: 10px; margin-top: -5px; pointer-events: none; }
.layercombo { width: 245px; height: 21px; }

.frame { flex: 1; display: flex; flex-direction: column; border: 1px solid #000; border-left: 2px solid #222; background: #b9d1ea; padding: 0 7px 1px 7px; box-shadow: inset -1px -1px #35c4dc; }
.frametitle { display: flex; align-items: center; height: 28px; margin: 0 -6px 0 -7px; padding: 0 4px 0 5px; gap: 4px; background: linear-gradient(#99b4d1, #b9d1ea); }
.frametitle .mdi { margin-left: auto; display: flex; gap: 2px; }
.mdi button { width: 39px; height: 24px; border: 1px solid #6a83a3; border-radius: 2px; box-shadow: inset 0 0 0 1px #d3e2f2; background: linear-gradient(#bcd0e6 50%, #9fb9d6 50%); }
.mdi button.close { border-color: #4d1414; box-shadow: inset 0 0 0 1px #d99a8f; background: linear-gradient(#dc9285 48%, #b5331b 50%, #c4503a); }
.mdi svg { width: 18px; height: 16px; }

.work { flex: 1; display: flex; background: #f0f0f0; }
.side { width: 204px; flex: none; display: flex; flex-direction: column; }
.tocpane { border-left: 2px solid #6d6d6d; border-top: 2px solid #6d6d6d; padding: 1px 3px 1px 1px; }
.tocbox { border: 1px solid #d9d9d9; background: #fff; padding: 1px 3px 5px 0; display: flex; flex-direction: column; }
.tabs { display: flex; align-items: flex-end; height: 22px; background: #f0f0f0; }
.tabs button { width: 31px; height: 20px; border: 1px solid #d9d9d9; border-left: 0; border-bottom: 0; }
.tabs button.on { width: 34px; height: 22px; background: #fff; }
.tabs svg { width: 16px; height: 16px; }
.tree { height: 454px; border: 1px solid #d9d9d9; padding: 2px 0 2px 1px; display: flex; flex-direction: column; background: #fff; overflow: hidden; }
.tree ul { list-style: none; margin: 0; padding: 0; flex: 1; }
.row { display: flex; height: 20px; }
.node { width: 23px; flex: none; padding: 6px 0 0 3px; background: repeating-linear-gradient(90deg, #888 0 1px, transparent 1px 2px) 8px 11px / 11px 1px no-repeat, repeating-linear-gradient(#888 0 1px, transparent 1px 2px) 8px 0 / 1px 20px no-repeat; }
.first .node { background-position: 8px 11px, 8px 11px; }
.last .node { background-size: 11px 1px, 1px 11px; }
.expander { display: block; width: 11px; height: 11px; border: 1px solid #999; border-radius: 1px; background: linear-gradient(#34569c, #34569c) center / 7px 1px no-repeat, #f4f4f4; }
.row label { display: flex; white-space: nowrap; }
.row label svg { width: 14px; height: 14px; margin: 2px 5px 0 11px; }
.row label span { line-height: 20px; }
.row .current { font-weight: bold; }
.row input { appearance: none; width: 16px; height: 16px; margin: 5px 0 0; border: 1px solid #333; background: #fff; flex: none; }
.row input:checked::after { content: ""; display: block; width: 10px; height: 5px; margin: 3px 0 0 2px; border: solid #333; border-width: 0 0 1px 1px; transform: rotate(-45deg); }
.legend { display: flex; height: 15px; }
.legend.cont { background: repeating-linear-gradient(#888 0 1px, transparent 1px 2px) 8px 0 / 1px 15px no-repeat; }
.elbow { width: 10px; height: 8px; margin: 1px 31px 0 27px; border: dotted #999; border-width: 0 0 1px 1px; }
.legend svg { width: 20px; height: 14px; margin-top: 1px; }
.hscroll { display: flex; height: 19px; background: #f0f0f0; }
.hscroll button { width: 21px; }
.hscroll button:last-child { margin-left: auto; }
.hscroll svg { width: 10px; height: 10px; }
.thumb { width: 20px; background: #cdcdcd; }
.bottomtabs { display: flex; align-items: flex-start; height: 23px; }
.bottomtabs button { height: 20px; border: 1px solid #d9d9d9; border-top: 0; width: 59px; border-left: 0; }
.bottomtabs button.on { width: 36px; height: 23px; background: #fff; border-left: 1px solid #d9d9d9; margin-top: -1px; }
.overview { flex: 1; margin-top: 3px; border: solid #6d6d6d; border-width: 1px 0 0 2px; background: #fff; box-shadow: 0 -1px #fff; }

.mapview { position: relative; flex: 1; margin-left: 4px; border: solid #6d6d6d; border-width: 1px 0 0 1px; background: #fff; min-width: 0; }
.map { max-width: none; }

.inspector { position: absolute; top: 3px; right: 4px; width: 700px; border: 1px solid #4a4a4a; border-radius: 7px 7px 0 0; background: #d7e4f2; padding: 0 7px 2px; }
.institle { display: flex; align-items: center; height: 32px; margin: 0 -7px; padding: 0 4px 0 5px; gap: 5px; border-radius: 6px 6px 0 0; background: linear-gradient(#bfcddb, #d7e4f2); }
.institle .mdi { margin-left: auto; display: flex; gap: 2px; }
.institle .mdi button { border-color: #8fa3ba; background: #c3d1e1; box-shadow: inset 0 0 0 1px #d8e4f0; }
.insbody { background: #f0f0f0; padding: 4px 0 0 7px; }
.instabs { display: flex; align-items: flex-end; height: 23px; }
.instabs button { border: 1px solid #d9d9d9; border-bottom: 0; height: 23px; width: 56px; background: #fff; }
.instabs button:disabled { width: 75px; height: 21px; color: #a8a8a8; background: #f0f0f0; border-left: 0; }
.inspanel { border: 1px solid #d9d9d9; box-shadow: inset 0 2px #fff, inset 1px 0 #fff; padding: 5px 7px 4px 8px; }
.insbar { display: flex; align-items: center; height: 22px; }
.insbar label { width: 51px; flex: none; }
.rulecombo { width: 275px; height: 22px; margin-right: 11px; }
.rulecombo select { background: #e1e1e1; }
.insgroups { display: flex; gap: 12px; }
.insgroup { display: flex; gap: 9px; }
.insgroup:nth-child(4), .insgroup:nth-child(5) { margin-left: 4px; }
.insgroup button { width: 19px; height: 19px; border: 1px solid #adadad; background: #e1e1e1; }
.insgroup svg { width: 16px; height: 16px; }
.tablebox { margin-top: 6px; border: 1px solid #82868f; padding-bottom: 5px; }
table { width: 100%; border-collapse: separate; border-spacing: 0; table-layout: fixed; }
th { height: 29px; padding: 3px 0 0 5px; background: #fff; font-weight: normal; text-align: left; border-right: 1px solid #e5e5e5; white-space: nowrap; }
td { height: 16px; padding: 0 0 0 1px; line-height: 15px; background: #0078d7; color: #fff; border-right: 1px solid #827f7a; border-bottom: 1px solid #827f7a; white-space: nowrap; overflow: hidden; }
td.mid { padding: 0; text-align: center; }
td input { appearance: none; display: block; width: 16px; height: 15px; margin: 0 auto; background: #fff; border: 1px solid #333; border-top: 0; }
.count { height: 21px; padding-top: 4px; line-height: 17px; }

.status { display: flex; align-items: center; height: 22px; background: #f0f0f0; padding-right: 272px; }
.inf { font: bold 15px/20px "Liberation Serif", serif; color: #0000e0; padding-left: 6px; margin-right: auto; }
.scalecombo { width: 127px; height: 21px; margin: 0 2px 0 1px; }
.cell { height: 19px; line-height: 17px; padding-left: 1px; border: 1px solid; border-color: #777 #fff #fff #777; white-space: nowrap; margin-right: 1px; }
.units { width: 43px; }
.lon { width: 111px; }
.lat { width: 108px; }
.epsg { width: 67px; margin-right: 0; }
</style>
